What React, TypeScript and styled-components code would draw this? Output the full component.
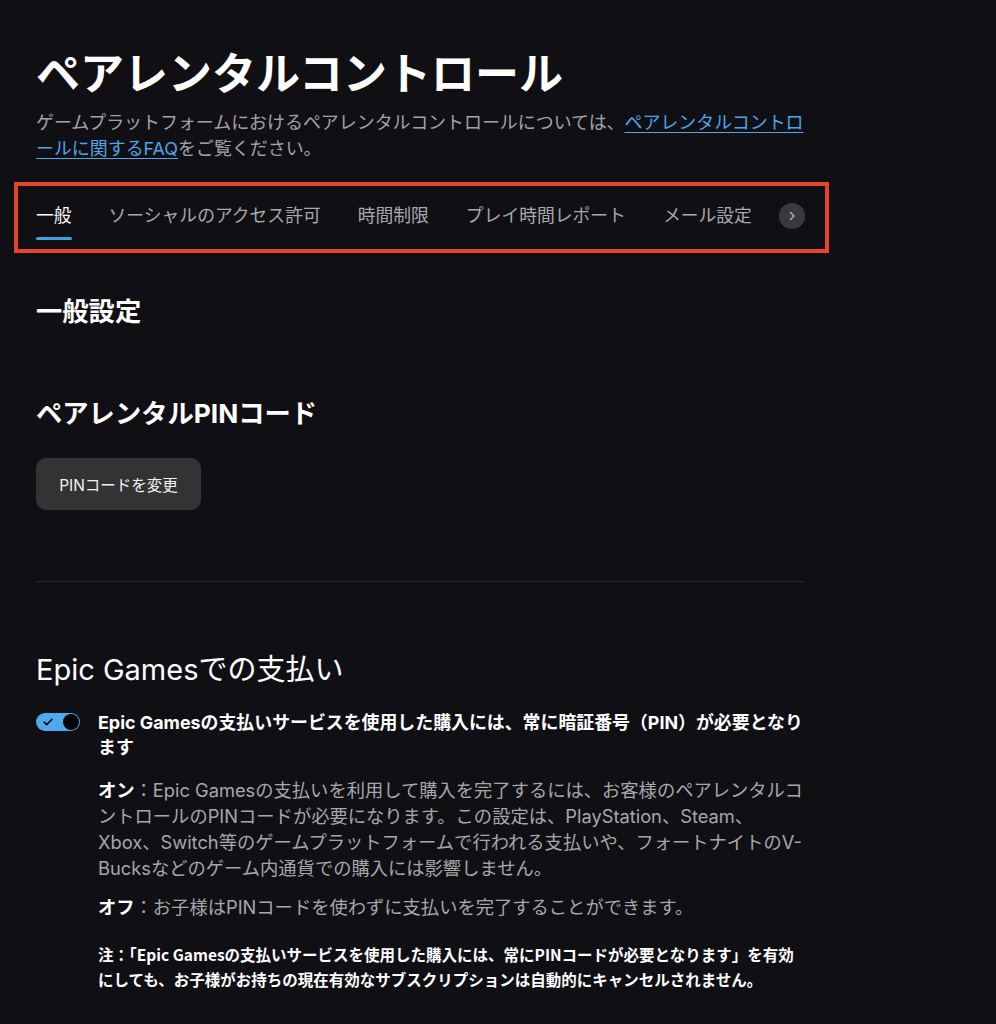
import React from "react";
import styled, { createGlobalStyle } from "styled-components";

const Global = createGlobalStyle`
  html, body { margin: 0; padding: 0; background: #101014; }
  body {
    font-family: "Inter", "Noto Sans CJK JP", sans-serif;
    color: #ffffff;
    -webkit-font-smoothing: antialiased;
  }
  * { box-sizing: border-box; }
`;

const Page = styled.div`
  width: 996px;
  height: 1024px;
  overflow: hidden;
  background: #101014;
  padding: 47px 0 0 36px;
`;

const Content = styled.div`
  width: 772px;
  display: flex;
  flex-direction: column;
`;

const Title = styled.h1`
  margin: 0;
  font-size: 44px;
  line-height: 54px;
  font-weight: 700;
  color: #ffffff;
`;

const Subtitle = styled.p`
  margin: 9px 0 0 0;
  font-size: 17.95px;
  line-height: 26px;
  color: #a3a3a7;
`;

const Link = styled.a`
  color: #4ea6ea;
  text-decoration: underline;
  text-underline-offset: 3px;
  text-decoration-thickness: 1px;
`;

const Highlight = styled.div`
  margin: 20px 0 0 -22px;
  width: 815px;
  height: 71px;
  border: 4px solid #e5432b;
  padding: 0 0 0 18px;
`;

const TabRow = styled.div`
  display: flex;
  align-items: flex-start;
  gap: 37px;
`;

const Tab = styled.div<{ $active?: boolean }>`
  display: flex;
  flex-direction: column;
  align-items: stretch;
  padding-top: 17px;
  font-size: 17.8px;
  line-height: 26px;
  white-space: nowrap;
  color: ${(p) => (p.$active ? "#ffffff" : "#a9a9ad")};
  &::after {
    content: "";
    display: block;
    height: 3px;
    margin-top: 8px;
    border-radius: 2px;
    background: ${(p) => (p.$active ? "#3d9fe6" : "transparent")};
  }
`;

const ScrollButton = styled.div`
  margin: 17px 0 0 -10px;
  width: 26px;
  height: 26px;
  border-radius: 50%;
  background: #3a3a3e;
  display: flex;
  align-items: center;
  justify-content: center;
`;

const SectionTitle = styled.h2<{ $top: number }>`
  margin: ${(p) => p.$top}px 0 0 0;
  font-size: 26.3px;
  line-height: 34px;
  font-weight: 700;
  color: #ffffff;
`;

const PaymentTitle = styled.h2`
  margin: 71px 0 0 0;
  font-size: 29px;
  line-height: 34px;
  font-weight: 400;
  color: #ffffff;
`;

const Button = styled.button`
  margin-top: 27px;
  width: 165px;
  height: 52px;
  border: none;
  border-radius: 10px;
  background: #333336;
  color: #f2f2f2;
  font-family: "Inter", "Noto Sans CJK JP", sans-serif;
  font-size: 15.5px;
  display: flex;
  align-items: center;
  justify-content: center;
  padding: 0;
`;

const Divider = styled.hr`
  margin: 71px 0 0 0;
  border: none;
  height: 1px;
  width: 769px;
  background: #29292d;
`;

const ToggleRow = styled.div`
  margin-top: 23px;
  display: grid;
  grid-template-columns: 44px 1fr;
  column-gap: 18px;
`;

const Toggle = styled.span`
  margin-top: 3px;
  width: 44px;
  height: 18px;
  border-radius: 9px;
  background: #4ea9ef;
  display: flex;
  align-items: center;
  justify-content: space-between;
  padding: 0 1px 0 7px;
`;

const Knob = styled.span`
  width: 16px;
  height: 16px;
  border-radius: 50%;
  background: #000;
`;

const ToggleLabel = styled.div`
  font-size: 17.9px;
  line-height: 25px;
  font-weight: 700;
  color: #ffffff;
`;

const Details = styled.div`
  grid-column: 2;
  display: flex;
  flex-direction: column;
`;

const Para = styled.p<{ $top: number }>`
  margin: ${(p) => p.$top}px 0 0 0;
  font-size: 18.3px;
  line-height: 26px;
  color: #a7a7ab;
`;

const Strong = styled.strong`
  color: #ffffff;
  font-weight: 700;
`;

const Note = styled.p`
  margin: 22px 0 0 0;
  font-family: "Noto Sans CJK JP", sans-serif;
  font-size: 15.5px;
  line-height: 25px;
  font-weight: 700;
  color: #ffffff;
`;

export default function App() {
  return (
    <>
      <Global />
      <Page>
        <Content>
          <Title>ペアレンタルコントロール</Title>
          <Subtitle>
            ゲームプラットフォームにおけるペアレンタルコントロールについては、
            <Link href="#">ペアレンタルコントロールに関するFAQ</Link>をご覧ください。
          </Subtitle>
          <Highlight>
            <TabRow>
              <Tab $active>一般</Tab>
              <Tab>ソーシャルのアクセス許可</Tab>
              <Tab>時間制限</Tab>
              <Tab>プレイ時間レポート</Tab>
              <Tab>メール設定</Tab>
              <ScrollButton>
                <svg width="12" height="12" viewBox="0 0 12 12" fill="none">
                  <path d="M4.5 2.5L8 6L4.5 9.5" stroke="#b9b9bd" strokeWidth="1.4" strokeLinecap="round" strokeLinejoin="round" />
                </svg>
              </ScrollButton>
            </TabRow>
          </Highlight>
          <SectionTitle $top={42}>一般設定</SectionTitle>
          <SectionTitle $top={68}>ペアレンタルPINコード</SectionTitle>
          <Button>PINコードを変更</Button>
          <Divider />
          <PaymentTitle>Epic Gamesでの支払い</PaymentTitle>
          <ToggleRow>
            <Toggle>
              <svg width="10" height="8" viewBox="0 0 10 8" fill="none">
                <path d="M1 4.2L3.7 6.6L9 1.2" stroke="#0b0b0f" strokeWidth="1.6" strokeLinecap="round" strokeLinejoin="round" />
              </svg>
              <Knob />
            </Toggle>
            <ToggleLabel>
              Epic Gamesの支払いサービスを使用した購入には、常に暗証番号（PIN）が必要となります
            </ToggleLabel>
            <Details>
              <Para $top={17}>
                <Strong>オン</Strong>：Epic Gamesの支払いを利用して購入を完了するには、お客様のペアレンタルコントロールのPINコードが必要になります。この設定は、PlayStation、Steam、Xbox、Switch等のゲームプラットフォームで行われる支払いや、フォートナイトのV-Bucksなどのゲーム内通貨での購入には影響しません。
              </Para>
              <Para $top={13}>
                <Strong>オフ</Strong>：お子様はPINコードを使わずに支払いを完了することができます。
              </Para>
              <Note>
                注：「Epic Gamesの支払いサービスを使用した購入には、常にPINコードが必要となります」を有効にしても、お子様がお持ちの現在有効なサブスクリプションは自動的にキャンセルされません。
              </Note>
              <Para $top={31}>
                サブスクリプションの管理については、<Link href="#">こちらのページ</Link>をご覧ください。
              </Para>
            </Details>
          </ToggleRow>
        </Content>
      </Page>
    </>
  );
}
